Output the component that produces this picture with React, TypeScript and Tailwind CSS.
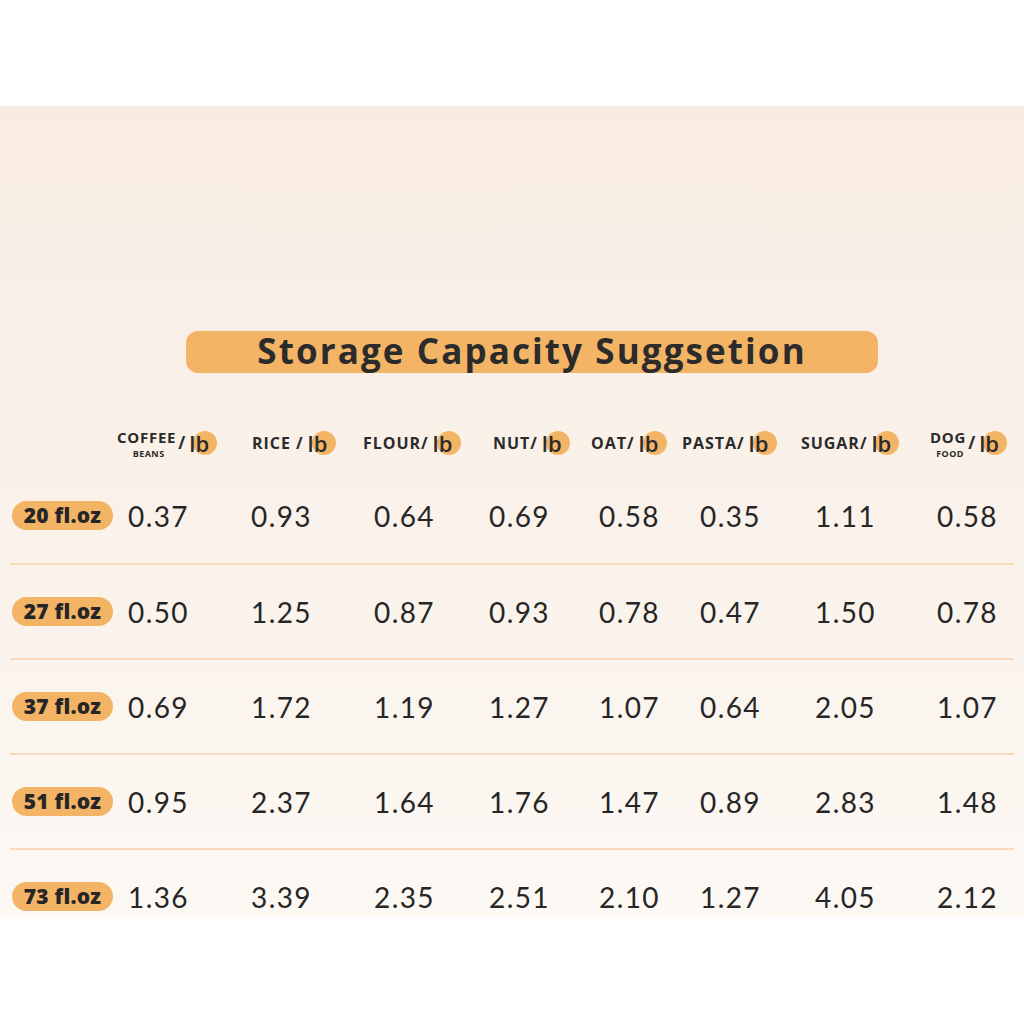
import React from 'react'

const headers = [
  { top: 'COFFEE', sub: 'BEANS', w: 'w-[135px]' },
  { top: 'RICE /', w: 'w-[111px]' },
  { top: 'FLOUR/', w: 'w-[130px]' },
  { top: 'NUT/', w: 'w-[98px]' },
  { top: 'OAT/', w: 'w-[91px]' },
  { top: 'PASTA/', w: 'w-[119px]' },
  { top: 'SUGAR/', w: 'w-[129px]' },
  { top: 'DOG', sub: 'FOOD', w: 'w-[90px]' },
]

const colWidths = ['w-[123px]', 'w-[123px]', 'w-[115px]', 'w-[110px]', 'w-[101px]', 'w-[115px]', 'w-[122px]', 'w-[87px]']

const rows = [
  { size: '20 fl.oz', vals: ['0.37', '0.93', '0.64', '0.69', '0.58', '0.35', '1.11', '0.58'] },
  { size: '27 fl.oz', vals: ['0.50', '1.25', '0.87', '0.93', '0.78', '0.47', '1.50', '0.78'] },
  { size: '37 fl.oz', vals: ['0.69', '1.72', '1.19', '1.27', '1.07', '0.64', '2.05', '1.07'] },
  { size: '51 fl.oz', vals: ['0.95', '2.37', '1.64', '1.76', '1.47', '0.89', '2.83', '1.48'] },
  { size: '73 fl.oz', vals: ['1.36', '3.39', '2.35', '2.51', '2.10', '1.27', '4.05', '2.12'] },
]

const Lb = () => (
  <span className="relative ml-[4px] inline-flex h-[24px] items-center">
    <span className="absolute left-[4px] top-0 h-[24px] w-[24px] rounded-full bg-[#f3b565]" />
    <span className="relative text-[22px] font-semibold leading-none text-[#2b2b2b]">lb</span>
  </span>
)

const Header = ({ top, sub, w }: { top: string; sub?: string; w: string }) => (
  <div className={`${w} flex shrink-0 items-center`}>
    {sub ? (
      <>
        <span className="flex flex-col items-center">
          <span className="text-[15px] font-bold leading-[21px] tracking-[0.05em]">{top}</span>
          <span className="-mt-[1px] pl-[4px] text-[9px] font-bold leading-[13px] tracking-[0.05em]">{sub}</span>
        </span>
        <span className="ml-[2px] text-[17px] font-bold">/</span>
      </>
    ) : (
      <span className="text-[16px] font-bold tracking-[0.06em]">{top}</span>
    )}
    <Lb />
  </div>
)

export default function App() {
  return (
    <div className="min-h-[1024px] bg-white pt-[106px] text-[#2a2a2a]" style={{ fontFamily: '"Open Sans", "Liberation Sans", sans-serif' }}>
      <div className="h-[811px] overflow-hidden bg-gradient-to-b from-[#f8ece2] to-[#fcf8f3] pt-[225px]">
        <div className="ml-[186px] flex h-[42px] w-[692px] items-center justify-center rounded-[12px] bg-[#f4b466]">
          <span className="-mt-[4px] text-[35px] font-bold leading-none tracking-[0.06em] text-[#2b2b2b]">Storage Capacity Suggsetion</span>
        </div>

        <div className="mt-[56px] flex h-[28px] items-center pl-[117px] text-[#2b2b2b]">
          {headers.map((h) => (
            <Header key={h.top} {...h} />
          ))}
        </div>

        <div className="mt-[11px] px-[10px]">
          {rows.map((r, i) => (
            <div key={r.size} className={`flex h-[95px] items-center ${i > 0 ? 'border-t-2 border-[#f8d9bc]' : ''}`}>
              <div className="ml-[2px] flex h-[29px] w-[101px] shrink-0 items-center justify-center rounded-full bg-[#f3b466]">
                <span className="text-[21px] font-extrabold leading-none tracking-[0.01em] text-[#262626]">{r.size}</span>
              </div>
              <div className="ml-[15px] flex">
                {r.vals.map((v, j) => (
                  <div key={j} className={`${colWidths[j]} shrink-0 text-[28px] leading-none tracking-[0.05em] text-[#262626]`} style={{ fontFamily: 'Lato, sans-serif' }}>
                    {v}
                  </div>
                ))}
              </div>
            </div>
          ))}
        </div>
      </div>
    </div>
  )
}
